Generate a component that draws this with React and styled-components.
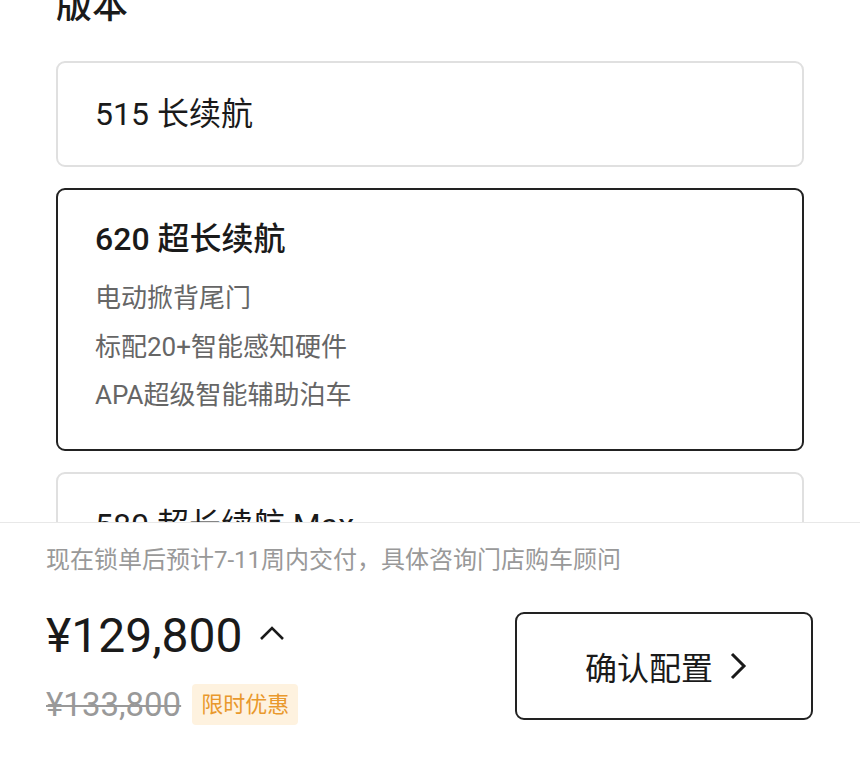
import React from "react";
import styled, { createGlobalStyle } from "styled-components";

const GlobalStyle = createGlobalStyle`
  html, body {
    margin: 0;
    padding: 0;
    background: #fff;
    font-family: Roboto, "Noto Sans CJK SC", sans-serif;
    color: #1a1a1a;
  }
`;

const versions = [
  { id: 515, name: "515 长续航", features: [] },
  {
    id: 620,
    name: "620 超长续航",
    features: ["电动掀背尾门", "标配20+智能感知硬件", "APA超级智能辅助泊车"],
    selected: true,
  },
  { id: 580, name: "580 超长续航 Max", features: [] },
];

export default function App() {
  return (
    <>
      <GlobalStyle />
      <Page>
        <Scroll>
          <Title>版本</Title>
          <List>
            {versions.map((v) => (
              <Card key={v.id} $selected={v.selected}>
                <CardTitle $selected={v.selected}>{v.name}</CardTitle>
                {v.features.length > 0 && (
                  <Features>
                    {v.features.map((f) => (
                      <li key={f}>{f}</li>
                    ))}
                  </Features>
                )}
              </Card>
            ))}
          </List>
        </Scroll>
        <Footer>
          <Note>现在锁单后预计7-11周内交付，具体咨询门店购车顾问</Note>
          <PriceRow>
            <PriceCol>
              <Price>
                ¥129,800
                <svg width="26" height="16" viewBox="0 0 26 16" fill="none">
                  <path d="M2 14 L13 3 L24 14" stroke="#1a1a1a" strokeWidth="2.6" />
                </svg>
              </Price>
              <OldRow>
                <OldPrice>¥133,800</OldPrice>
                <Badge>限时优惠</Badge>
              </OldRow>
            </PriceCol>
            <ConfirmButton>
              确认配置
              <svg width="18" height="28" viewBox="0 0 18 28" fill="none">
                <path d="M3 2 L15 14 L3 26" stroke="#1a1a1a" strokeWidth="3" />
              </svg>
            </ConfirmButton>
          </PriceRow>
        </Footer>
      </Page>
    </>
  );
}

const Page = styled.div`
  height: 776px;
  display: flex;
  flex-direction: column;
  overflow: hidden;
`;

const Scroll = styled.div`
  flex: 1;
  overflow: hidden;
  padding: 0 56px;
`;

const Title = styled.h2`
  margin: -19px 0 30px;
  font-size: 36px;
  line-height: 50px;
  font-weight: 500;
  color: #1a1a1a;
`;

const List = styled.div`
  display: flex;
  flex-direction: column;
  gap: 21px;
`;

const Card = styled.div`
  border: 2px solid ${({ $selected }) => ($selected ? "#222" : "#e0e0e0")};
  border-radius: 9px;
  padding: ${({ $selected }) => ($selected ? "26px 37px 29px" : "28px 37px")};
`;

const CardTitle = styled.div`
  font-size: 32px;
  line-height: 46px;
  font-weight: ${({ $selected }) => ($selected ? 500 : 400)};
  color: #1a1a1a;
`;

const Features = styled.ul`
  list-style: none;
  margin: 12px 0 0;
  padding: 0;
  font-size: 26px;
  line-height: 48.5px;
  color: #666;
`;

const Footer = styled.div`
  height: 254px;
  border-top: 1px solid #e8e8e8;
  padding: 21px 47px 0 46px;
  box-sizing: border-box;
`;

const Note = styled.div`
  font-size: 24px;
  line-height: 32px;
  color: #999;
`;

const PriceRow = styled.div`
  display: flex;
  align-items: center;
  justify-content: space-between;
  margin-top: 30px;
`;

const PriceCol = styled.div`
  display: flex;
  flex-direction: column;
`;

const Price = styled.div`
  display: flex;
  align-items: center;
  gap: 16px;
  font-size: 48px;
  line-height: 60px;
  color: #1a1a1a;
  svg {
    margin-top: -6px;
  }
`;

const OldRow = styled.div`
  display: flex;
  align-items: center;
  gap: 11px;
  margin-top: 18px;
`;

const OldPrice = styled.span`
  font-size: 33px;
  line-height: 40px;
  color: #999;
  text-decoration: line-through;
  text-decoration-thickness: 2px;
`;

const Badge = styled.span`
  background: #fef2df;
  color: #e9992d;
  font-size: 22px;
  line-height: 41px;
  padding: 0 9px;
  border-radius: 4px;
`;

const ConfirmButton = styled.button`
  width: 298px;
  height: 108px;
  border: 2px solid #222;
  border-radius: 9px;
  background: #fff;
  display: flex;
  align-items: center;
  justify-content: center;
  gap: 16px;
  font-family: Roboto, "Noto Sans CJK SC", sans-serif;
  font-size: 32px;
  color: #1a1a1a;
  padding: 0;
  padding-left: 4px;
`;
